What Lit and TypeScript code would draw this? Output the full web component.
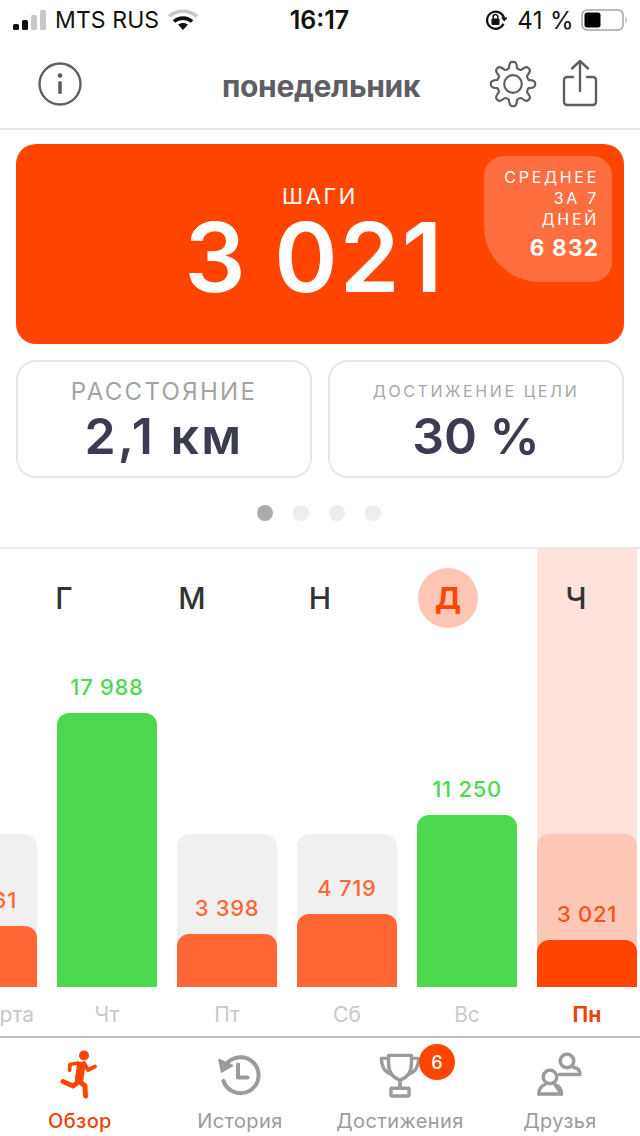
import { LitElement, html, css } from "lit";
import { customElement } from "lit/decorators.js";
import { classMap } from "lit/directives/class-map.js";

function gearPath(cx: number, cy: number, rO: number, rI: number, n: number) {
  const pts: string[] = [];
  const step = (Math.PI * 2) / n;
  for (let i = 0; i < n; i++) {
    const a = i * step - Math.PI / 2;
    const o = step * 0.17;
    const w = step * 0.33;
    const p = (r: number, t: number) => `${(cx + r * Math.cos(t)).toFixed(2)} ${(cy + r * Math.sin(t)).toFixed(2)}`;
    pts.push(`${i === 0 ? "M" : "L"}${p(rI, a - w)}`);
    pts.push(`Q${p(rO * 0.98, a - o * 1.25)} ${p(rO, a - o * 0.6)}`);
    pts.push(`Q${p(rO * 1.02, a)} ${p(rO, a + o * 0.6)}`);
    pts.push(`Q${p(rO * 0.98, a + o * 1.25)} ${p(rI, a + w)}`);
    pts.push(`Q${p(rI * 0.93, a + step / 2)} ${p(rI, a + step - w)}`);
  }
  return pts.join(" ") + "Z";
}

interface Day { value: string; h: number; label: string; green?: boolean; selected?: boolean; }
const DAYS: Day[] = [
  { value: "3 961", h: 61, label: "26 марта" },
  { value: "17 988", h: 274, label: "Чт", green: true },
  { value: "3 398", h: 53, label: "Пт" },
  { value: "4 719", h: 73, label: "Сб" },
  { value: "11 250", h: 172, label: "Вс", green: true },
  { value: "3 021", h: 47, label: "Пн", selected: true },
];
const LETTERS = ["Г", "М", "Н", "Д", "Ч"];

@customElement("app-root")
export class AppRoot extends LitElement {
  static styles = css`
    :host { display: block; width: 640px; height: 1136px; overflow: hidden; background: #fff; font-family: Inter, "Noto Sans", sans-serif; color: #222; }
    svg { display: block; }
    .status { height: 40px; display: grid; grid-template-columns: 1fr auto 1fr; align-items: center; padding: 0 12px 0 13px; font-size: 23px; color: #111; font-weight: 400; }
    .st-left, .st-right { display: flex; align-items: center; }
    .st-left { gap: 9px; }
    .st-right { justify-content: flex-end; gap: 9px; }
    .carrier { letter-spacing: 0.1px; }
    .time { font-weight: 600; font-size: 25px; padding-right: 2px; }
    .pct { font-size: 24px; letter-spacing: 0.4px; margin-left: 1px; }
    .batt { margin-left: -2px; }
    .header { height: 88px; border-bottom: 2px solid #e5e5e5; display: grid; grid-template-columns: 1fr auto 1fr; align-items: center; padding: 0 40px 0 38px; }
    .title { font-size: 30px; font-weight: 700; color: #5f5f63; letter-spacing: -0.35px; padding: 3px 0 0 4px; }
    .hdr-actions { display: flex; gap: 25px; align-items: center; justify-content: flex-end; padding-right: 2px; }
    .share { margin-bottom: 3px; }
    .card { position: relative; margin: 14px 16px 0; height: 200px; background: #ff4500; border-radius: 20px; color: #fff; display: flex; flex-direction: column; align-items: center; }
    .card-label { margin-top: 40px; font-size: 22px; letter-spacing: 2.6px; font-weight: 400; line-height: 24px; }
    .card-num { font-size: 96px; font-weight: 600; line-height: 76px; letter-spacing: 2.2px; margin-top: 11px; padding-right: 11px; }
    .avg { position: absolute; right: 12px; top: 12px; width: 128px; height: 126px; box-sizing: border-box; background: #ff6e3f; border-radius: 20px 20px 20px 56px; padding: 11px 13px 0 0; text-align: right; font-size: 16px; letter-spacing: 2.7px; line-height: 21px; }
    .avg b { display: block; font-size: 22.5px; font-weight: 700; letter-spacing: 1.2px; margin-top: 5px; line-height: 26px; }
    .stats { display: grid; grid-template-columns: 1fr 1fr; gap: 16px; margin: 16px 16px 0; }
    .stat { height: 118px; box-sizing: border-box; border: 2px solid #e6e6e6; border-radius: 20px; text-align: center; display: flex; flex-direction: column; align-items: center; }
    .stat-label { height: 46px; display: flex; align-items: flex-end; color: #a3a3a3; font-size: 24px; letter-spacing: 2.3px; line-height: 32px; }
    .stat-label.small { font-size: 16px; letter-spacing: 2.6px; color: #a8a8a8; padding-bottom: 3px; height: 43px; line-height: 28px; }
    .stat-value { font-size: 50px; font-weight: 600; color: #3c3c50; line-height: 56px; }
    .stat-value.wide { letter-spacing: 2.4px; }
    .dots { display: flex; justify-content: center; gap: 20px; margin-top: 27px; padding-right: 2px; }
    .dot { width: 16px; height: 16px; border-radius: 50%; background: #ececec; }
    .dot.on { background: #ababab; }
    .chart { margin-top: 26px; border-top: 2px solid #e9e9e9; display: grid; width: 640px; }
    .letters, .cols { grid-area: 1 / 1; }
    .cols, .labels { display: grid; grid-template-columns: repeat(6, 100px); column-gap: 20px; margin-left: -63px; width: 700px; }
    .cols { height: 438px; }
    .letters { z-index: 1; display: grid; grid-template-columns: repeat(5, 128px); height: 98px; align-items: center; justify-items: center; font-size: 30px; font-weight: 500; color: #333; }
    .letter { width: 60px; height: 60px; border-radius: 50%; display: flex; align-items: center; justify-content: center; }
    .letter.on { background: #ffc6b4; color: #ff4500; font-weight: 700; }
    .col { display: flex; flex-direction: column; justify-content: flex-end; }
    .col.sel { background: #fde3dc; }
    .track { background: #f0f0f0; border-radius: 12px 12px 0 0; display: flex; flex-direction: column; justify-content: flex-end; }
    .sel .track { background: #ffc8b6; }
    .value { text-align: center; font-size: 22px; line-height: 28px; margin-bottom: 12px; font-weight: 500; color: #ff6633; letter-spacing: 0.7px; white-space: nowrap; }
    .sel .value { color: #ff4f14; }
    .col.green .value { color: #4cd94f; }
    .fill { background: #ff6633; border-radius: 12px 12px 0 0; }
    .sel .fill { background: #ff4500; }
    .col.green .fill { background: #4cd94f; }
    .labels { height: 49px; align-items: center; font-size: 21px; color: #c9c9c9; text-align: center; white-space: nowrap; }
    .labels div { padding-top: 6px; display: flex; justify-content: center; }
    .labels .sel { color: #e8440c; font-weight: 700; }
    .tabs { border-top: 2px solid #bdbdbd; display: grid; grid-template-columns: repeat(4, 160px); height: 98px; }
    .tab { display: flex; flex-direction: column; align-items: center; color: #9b9b9b; font-size: 20px; letter-spacing: 0.4px; padding-top: 10px; position: relative; }
    .tab.on { color: #e8440c; font-weight: 500; }
    .tab-icon { height: 52px; display: flex; justify-content: center; }
    .tab-text { line-height: 28px; margin-top: 7px; white-space: nowrap; }
    .badge { position: absolute; left: 99px; top: 6px; width: 36px; height: 36px; border-radius: 50%; background: #ff4500; color: #fff; display: flex; align-items: center; justify-content: center; font-size: 18px; font-weight: 500; letter-spacing: 0; }
  `;

  render() {
    return html`
      <div class="status">
        <div class="st-left">
          <svg width="33" height="20" viewBox="0 0 33 20">
            <rect x="0" y="14" width="6" height="6" rx="1.5" fill="#111"/>
            <rect x="9" y="10" width="6" height="10" rx="1.5" fill="#111"/>
            <rect x="18" y="5" width="6" height="15" rx="1.5" fill="#c8c8c8"/>
            <rect x="27" y="0" width="6" height="20" rx="1.5" fill="#c8c8c8"/>
          </svg>
          <span class="carrier">MTS RUS</span>
          <svg width="30" height="22" viewBox="0 0 30 22">
            <path d="M1 7.5C9 .5 21 .5 29 7.5" fill="none" stroke="#c8c8c8" stroke-width="3.6"/>
            <path d="M6 12.5C11 8 19 8 24 12.5" fill="none" stroke="#111" stroke-width="3.6"/>
            <path d="M10 15.5C13 13.4 17 13.4 20 15.5L15 21Z" fill="#111"/>
          </svg>
        </div>
        <div class="time">16:17</div>
        <div class="st-right">
          <svg width="22" height="22" viewBox="0 0 22 22">
            <path d="M18.5 14.8A8.6 8.6 0 1 1 19 9" fill="none" stroke="#111" stroke-width="2.2"/>
            <path d="M16 8.5h6.5l-3.2 4Z" fill="#111"/>
            <rect x="6.5" y="9.5" width="8" height="6.5" rx="1" fill="#111"/>
            <path d="M8.2 10V7.8a2.3 2.3 0 0 1 4.6 0V10" fill="none" stroke="#111" stroke-width="1.5"/>
          </svg>
          <span class="pct">41 %</span>
          <svg class="batt" width="47" height="22" viewBox="0 0 47 22">
            <rect x="1" y="1" width="41" height="20" rx="5" fill="none" stroke="#a5a5a5" stroke-width="1.5"/>
            <rect x="3.5" y="3.5" width="16" height="15" rx="2.5" fill="#000"/>
            <path d="M44.5 7.5c1.6.6 1.6 6.4 0 7Z" fill="#a5a5a5"/>
          </svg>
        </div>
      </div>

      <div class="header">
        <svg width="44" height="44" viewBox="0 0 44 44">
          <circle cx="22" cy="22" r="20.5" fill="none" stroke="#5f5f63" stroke-width="2.4"/>
          <circle cx="22" cy="13.6" r="2.4" fill="#5f5f63"/>
          <rect x="20.2" y="19" width="3.6" height="13" rx="1.6" fill="#5f5f63"/>
        </svg>
        <div class="title">понедельник</div>
        <div class="hdr-actions">
          <svg width="48" height="48" viewBox="0 0 48 48">
            <path d="${gearPath(24, 24, 22, 16.2, 8)}" fill="none" stroke="#5f5f63" stroke-width="2.2" stroke-linejoin="round"/>
            <circle cx="24" cy="24" r="8.8" fill="none" stroke="#5f5f63" stroke-width="2.2"/>
          </svg>
          <svg class="share" width="36" height="48" viewBox="0 0 36 48">
            <path d="M11 18H5a3 3 0 0 0-3 3v22a3 3 0 0 0 3 3h26a3 3 0 0 0 3-3V21a3 3 0 0 0-3-3h-6" fill="none" stroke="#5f5f63" stroke-width="2.4" stroke-linecap="round"/>
            <path d="M18 32V2M10 9.5 18 2l8 7.5" fill="none" stroke="#5f5f63" stroke-width="2.4" stroke-linecap="round" stroke-linejoin="round"/>
          </svg>
        </div>
      </div>

      <div class="card">
        <div class="card-label">ШАГИ</div>
        <div class="card-num">3 021</div>
        <div class="avg">СРЕДНЕЕ<br>ЗА 7<br>ДНЕЙ<b>6 832</b></div>
      </div>

      <div class="stats">
        <div class="stat"><div class="stat-label">РАССТОЯНИЕ</div><div class="stat-value wide">2,1 км</div></div>
        <div class="stat"><div class="stat-label small">ДОСТИЖЕНИЕ ЦЕЛИ</div><div class="stat-value">30 %</div></div>
      </div>

      <div class="dots">
        <div class="dot on"></div><div class="dot"></div><div class="dot"></div><div class="dot"></div>
      </div>

      <div class="chart">
        <div class="cols">
          ${DAYS.map((d) => {
            const inner = html`<div class="value">${d.value}</div><div class="fill" style="height:${d.h}px"></div>`;
            return html`<div class=${classMap({ col: true, green: !!d.green, sel: !!d.selected })}>
              ${d.green ? inner : html`<div class="track" style="height:153px">${inner}</div>`}
            </div>`;
          })}
        </div>
        <div class="letters">
          ${LETTERS.map((l) => html`<div class=${classMap({ letter: true, on: l === "Д" })}>${l}</div>`)}
        </div>
      </div>
      <div class="labels">
        ${DAYS.map((d) => html`<div class=${d.selected ? "sel" : ""}>${d.label}</div>`)}
      </div>

      <div class="tabs">
        <div class="tab on">
          <div class="tab-icon">
            <svg width="40" height="52" viewBox="0 0 40 52">
              <circle cx="24" cy="7.5" r="5" fill="#ff4500"/>
              <g fill="none" stroke="#ff4500" stroke-linecap="round" stroke-linejoin="round">
                <path d="M21 18 19 32" stroke-width="8.5"/>
                <path d="M19 33 25 38 25.5 48" stroke-width="5"/>
                <path d="M17 35 13 38 3 33.5" stroke-width="5"/>
                <path d="M18 15 10 16.5 9.5 22" stroke-width="3.8"/>
                <path d="M24 15 28 22 35 18.5" stroke-width="3.8"/>
              </g>
            </svg>
          </div>
          <div class="tab-text">Обзор</div>
        </div>
        <div class="tab">
          <div class="tab-icon">
            <svg width="44" height="52" viewBox="0 0 44 52">
              <path d="M6.8 18.5A18 18 0 1 1 5.5 33" fill="none" stroke="#9b9b9b" stroke-width="4" stroke-linecap="round"/>
              <path d="M1 11.5 14.5 17.5 3.5 24Z" fill="#9b9b9b" stroke="#9b9b9b" stroke-width="1.5" stroke-linejoin="round"/>
              <path d="M20 16.5V29.5H29.5" fill="none" stroke="#9b9b9b" stroke-width="4" stroke-linecap="round" stroke-linejoin="round"/>
            </svg>
          </div>
          <div class="tab-text">История</div>
        </div>
        <div class="tab">
          <div class="tab-icon">
            <svg width="42" height="52" viewBox="0 0 44 52">
              <g fill="none" stroke="#9b9b9b" stroke-linejoin="round" stroke-linecap="round">
                <path d="M10 6.500H34V15C34 24 29 30 22 32.500 15 30 10 24 10 15Z" stroke-width="3.600"/>
                <path d="M10 9.500H2.500C2.500 18 6 24 13 26.500M34 9.500H41.500C41.500 18 38 24 31 26.500" stroke-width="3.400"/>
                <path d="M22 33V41" stroke-width="4"/>
                <rect x="12.500" y="41" width="19" height="8" rx="1.500" stroke-width="3.600"/>
              </g>
            </svg>
          </div>
          <div class="tab-text">Достижения</div>
          <div class="badge">6</div>
        </div>
        <div class="tab">
          <div class="tab-icon">
            <svg width="46" height="52" viewBox="0 0 46 52">
              <g fill="none" stroke="#9b9b9b" stroke-width="3.400" stroke-linecap="round" stroke-linejoin="round">
                <circle cx="30" cy="13" r="6.800"/>
                <path d="M22.500 26.500H43C43 22 40 20 37 19.500"/>
                <circle cx="13" cy="29" r="6.800"/>
                <path d="M1.800 46C1.800 40 5.500 37.500 8 36.500M18 36.500C21 37.500 24.500 40 24.500 46Z"/>
                <path d="M1.800 46H24.500"/>
              </g>
            </svg>
          </div>
          <div class="tab-text">Друзья</div>
        </div>
      </div>
    `;
  }
}
